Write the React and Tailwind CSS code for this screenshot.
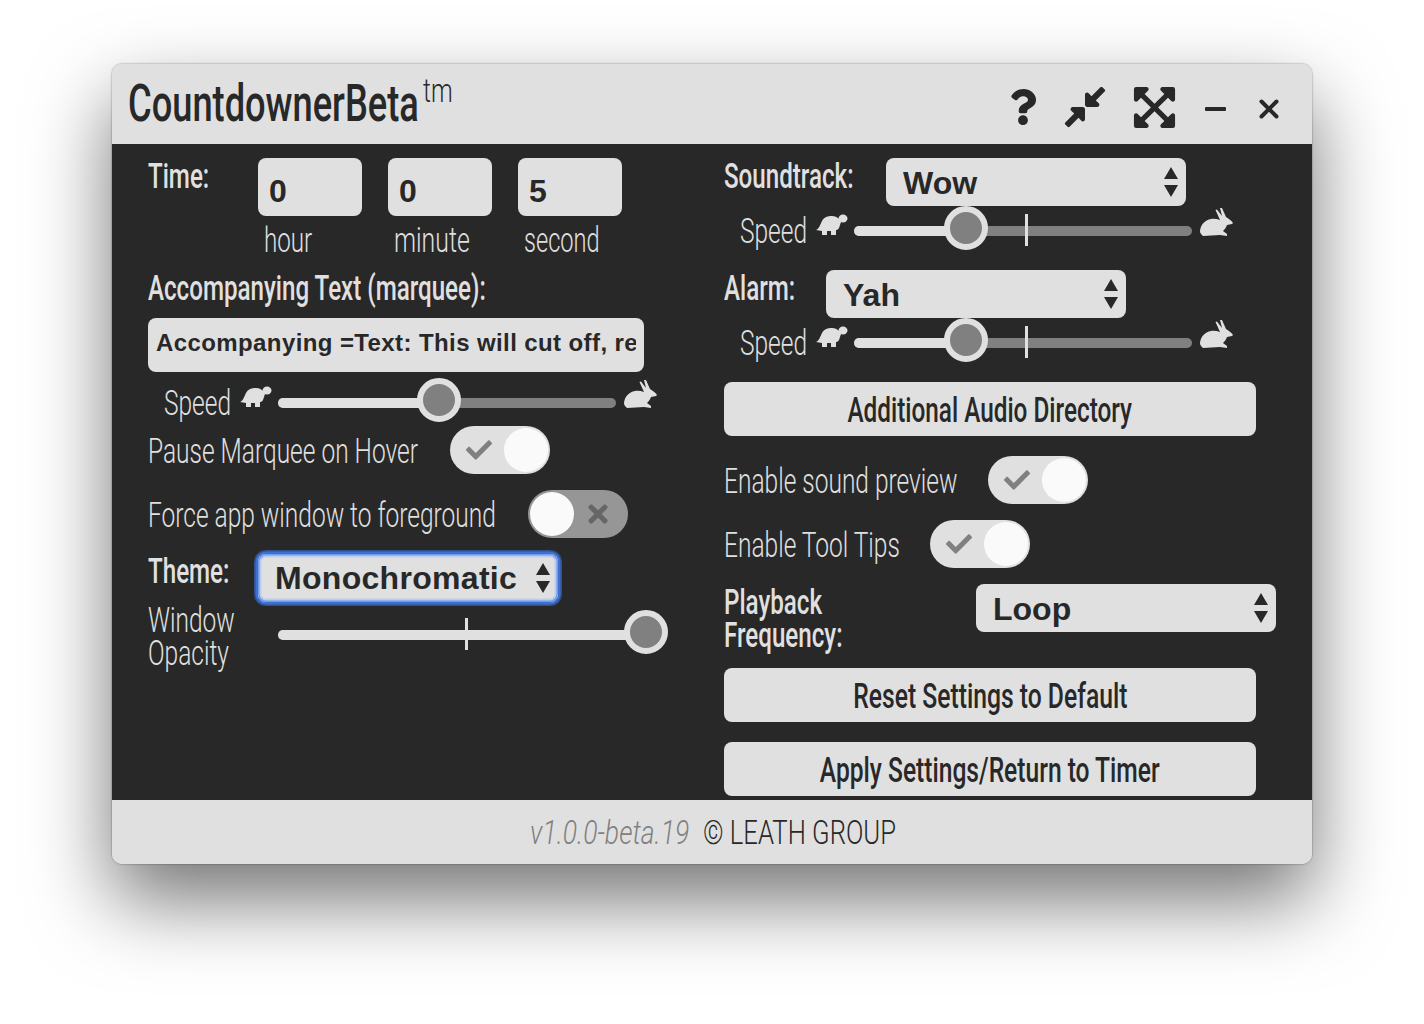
import React from 'react';
import { FaQuestion, FaCompressAlt, FaExpandArrowsAlt, FaTimes, FaCheck } from 'react-icons/fa';

const Nar = ({ children, className = '' }) => (
  <span className={`inline-block origin-left whitespace-nowrap font-['Roboto',sans-serif] ${className}`}>{children}</span>
);

// thin condensed label
const Label = ({ children, scale = 'scale-x-[0.7]' }) => (
  <Nar className={`text-[35px] leading-[32px] font-light text-[#e0e0e0] ${scale}`}>{children}</Nar>
);

// heavier condensed heading
const Heading = ({ children, scale = 'scale-x-[0.69]' }) => (
  <Nar className={`text-[35px] leading-[32px] font-medium text-[#e0e0e0] ${scale}`}>{children}</Nar>
);

const Turtle = () => (
  <svg width="32" height="22" viewBox="0 0 32 22" fill="#e0e0e0" className="shrink-0">
    <path d="M0 16 C3 15 4 11 6 7 C8 3 12 2 16 2 C19 2 21 3 23 5 L25 8 L23 14 C22 16 20 16 20 16 L20 21 L15 21 L15 17 L11 17 L11 21 L6 21 L6 17 Z" />
    <ellipse cx="27" cy="4.5" rx="4.5" ry="4" />
  </svg>
);

const Rabbit = () => (
  <svg width="33" height="29" viewBox="0 0 33 29" fill="#e0e0e0" className="shrink-0">
    <path d="M0 24 C0 17 5 12 11 11 C14 10.5 17 11 20 12 L15.5 2 L17 1.5 L22 8 L20 0 L22 0 L26 9 C29 11 32 13 33 15 L32 16 L27 17 C26 20 24 22 23 23 L27 26 L27 28 L20 27 L3 28 L1 26 Z" />
  </svg>
);

const Slider = ({ value, width = 338, tick }) => (
  <div className="relative h-[10px] rounded-full bg-[#808080] shrink-0" style={{ width }}>
    <div className="h-full rounded-full bg-[#e0e0e0]" style={{ width: value }} />
    {tick != null && <div className="absolute top-[-12px] h-[32px] w-[3px] bg-[#e0e0e0]" style={{ left: tick }} />}
    <div
      className="absolute top-[-20px] h-[44px] w-[44px] -ml-[22px] rounded-full border-[6px] border-[#e0e0e0] bg-[#808080]"
      style={{ left: value }}
    />
  </div>
);

const SpeedRow = ({ value, tick, className = '' }) => (
  <div className={`flex items-center h-[44px] pl-[16px] ${className}`}>
    <div className="w-[76px] shrink-0 pt-[2px]"><Label>Speed</Label></div>
    <div className="w-[38px] shrink-0 -mt-[12px]"><Turtle /></div>
    <Slider value={value} tick={tick} />
    <div className="ml-[8px] -mt-[18px]"><Rabbit /></div>
  </div>
);

const Toggle = ({ on }) => (
  <div className={`relative h-[48px] w-[100px] shrink-0 rounded-full ${on ? 'bg-[#e0e0e0]' : 'bg-[#969696]'}`}>
    <div className={`absolute top-[2px] h-[44px] w-[44px] rounded-full bg-[#fafafa] ${on ? 'right-[2px]' : 'left-[2px]'}`} />
    {on ? (
      <FaCheck className="absolute left-[16px] top-[11px] text-[#808080]" size={26} />
    ) : (
      <FaTimes className="absolute right-[16px] top-[10px] text-[#666666]" size={28} />
    )}
  </div>
);

const ToggleRow = ({ children, labelWidth, on, className = '' }) => (
  <div className={`flex items-center h-[48px] ${className}`}>
    <div className="shrink-0 pt-[4px]" style={{ width: labelWidth }}><Label>{children}</Label></div>
    <Toggle on={on} />
  </div>
);

const Select = ({ value, focused }) => (
  <div
    className={`relative h-[48px] w-[300px] shrink-0 rounded-[8px] bg-[#e0e0e0] ${
      focused
        ? 'shadow-[inset_0_0_0_1.5px_#6f9be8,inset_0_0_0_3.5px_#bccdee,0_0_0_2.5px_#3f6fd0,0_0_0_4px_#30508f]'
        : ''
    }`}
  >
    <select
      defaultValue={value}
      className={`h-full w-full appearance-none bg-transparent font-['Liberation_Sans',Arial,sans-serif] text-[32px] font-bold text-[#282828] outline-none ${
        focused ? 'pl-[17px] pb-[2px] tracking-[0.3px]' : 'pl-[17px] pt-[1px]'
      }`}
    >
      <option>{value}</option>
    </select>
    <svg
      width="16"
      height="32"
      viewBox="0 0 16 32"
      fill="#282828"
      className="absolute right-[7px] top-1/2 -translate-y-1/2"
    >
      <path d="M8 1 L15 13 L1 13 Z M1 19 L15 19 L8 31 Z" />
    </svg>
  </div>
);

const Button = ({ children, scale, className = '' }) => (
  <button className={`flex h-[54px] w-[532px] items-center justify-center rounded-[8px] bg-[#e0e0e0] pt-[4px] ${className}`}>
    <span className={`inline-block origin-center whitespace-nowrap font-['Roboto',sans-serif] text-[35px] leading-[32px] font-medium text-[#282828] ${scale}`}>
      {children}
    </span>
  </button>
);

const TimeBox = ({ value, unit, scale }) => (
  <div className="w-[104px] shrink-0">
    <input
      defaultValue={value}
      className="h-[58px] w-full rounded-[8px] bg-[#e0e0e0] pl-[11px] pt-[9px] font-['Liberation_Sans',Arial,sans-serif] text-[32px] font-bold text-[#282828] outline-none"
    />
    <div className="mt-[9px] pl-[6px]"><Label scale={scale}>{unit}</Label></div>
  </div>
);

const App = () => {
  return (
    <div className="flex h-[1024px] w-[1424px] justify-center overflow-hidden bg-white pt-[64px]">
      <div className="flex h-[800px] w-[1200px] flex-col overflow-hidden rounded-[10px] shadow-[0_36px_80px_rgba(0,0,0,0.55),0_0_2px_rgba(0,0,0,0.5)]">
        {/* title bar */}
        <div className="flex h-[80px] shrink-0 items-center bg-[#e0e0e0] pl-[16px] text-[#282828]">
          <div className="w-[290px] shrink-0">
            <Nar className="text-[52px] leading-[60px] font-medium scale-x-[0.697]">CountdownerBeta</Nar>
          </div>
          <div className="ml-[5px] w-[585px] -mt-[28px] shrink-0">
            <Nar className="text-[34px] leading-[40px] font-light scale-x-[0.72]">tm</Nar>
          </div>
          <FaQuestion size={36} className="-ml-[3px] mt-[6px] shrink-0" />
          <FaCompressAlt size={46} className="ml-[21px] mt-[6px] shrink-0" />
          <FaExpandArrowsAlt size={47} className="ml-[23px] mt-[6px] shrink-0" />
          <div className="ml-[27px] mt-[10px] h-[4px] w-[21px] shrink-0 rounded-[1px] bg-[#282828]" />
          <svg width="20" height="20" viewBox="0 0 20 20" className="ml-[33px] mt-[10px] shrink-0" stroke="#282828" strokeWidth="4" strokeLinecap="round">
            <path d="M2.5 2.5 L17.5 17.5 M17.5 2.5 L2.5 17.5" />
          </svg>
        </div>

        {/* settings */}
        <div className="flex flex-1 bg-[#282828] pl-[36px] pt-[14px]">
          <div className="w-[576px] shrink-0">
            <div className="flex h-[110px]">
              <div className="w-[110px] shrink-0 pt-[3px]"><Heading>Time:</Heading></div>
              <div className="flex gap-[26px]">
                <TimeBox value="0" unit="hour" scale="scale-x-[0.69]" />
                <TimeBox value="0" unit="minute" scale="scale-x-[0.71]" />
                <TimeBox value="5" unit="second" scale="scale-x-[0.675]" />
              </div>
            </div>
            <div className="h-[50px] pt-[5px]"><Heading>Accompanying Text (marquee):</Heading></div>
            <input
              defaultValue="Accompanying =Text: This will cut off, rest of it"
              className="block h-[54px] w-[496px] rounded-[8px] bg-[#e0e0e0] px-[8px] pb-[5px] font-['Liberation_Sans',Arial,sans-serif] text-[24px] font-bold tracking-[0.4px] text-[#282828] outline-none"
            />
            <SpeedRow value={161} className="mt-[9px]" />
            <ToggleRow labelWidth={302} on className="mt-[1px]">Pause Marquee on Hover</ToggleRow>
            <ToggleRow labelWidth={380} on={false} className="mt-[16px]">Force app window to foreground</ToggleRow>
            <div className="mt-[16px] flex h-[48px] items-center">
              <div className="w-[110px] shrink-0 -mt-[11px]"><Heading>Theme:</Heading></div>
              <Select value="Monochromatic" focused />
            </div>
            <div className="mt-[2px] flex">
              <div className="w-[130px] shrink-0 pt-[1px]">
                <div><Label>Window</Label></div>
                <div><Label>Opacity</Label></div>
              </div>
              <div className="pt-[26px]">
                <Slider value={368} width={368} tick={187} />
              </div>
            </div>
          </div>

          <div className="w-[560px] shrink-0">
            <div className="flex h-[48px]">
              <div className="w-[162px] shrink-0 pt-[3px]"><Heading>Soundtrack:</Heading></div>
              <Select value="Wow" />
            </div>
            <SpeedRow value={112} tick={171} className="mt-[3px]" />
            <div className="mt-[17px] flex h-[48px]">
              <div className="w-[102px] shrink-0 pt-[3px]"><Heading>Alarm:</Heading></div>
              <Select value="Yah" />
            </div>
            <SpeedRow value={112} tick={171} className="mt-[3px]" />
            <Button className="mt-[17px]" scale="scale-x-[0.695]">Additional Audio Directory</Button>
            <ToggleRow labelWidth={264} on className="mt-[20px]">Enable sound preview</ToggleRow>
            <ToggleRow labelWidth={206} on className="mt-[16px]">Enable Tool Tips</ToggleRow>
            <div className="mt-[16px] flex h-[48px]">
              <div className="w-[252px] shrink-0 pt-[3px]">
                <div><Heading>Playback</Heading></div>
                <div><Heading>Frequency:</Heading></div>
              </div>
              <Select value="Loop" />
            </div>
            <Button className="mt-[36px]" scale="scale-x-[0.705]">Reset Settings to Default</Button>
            <Button className="mt-[20px]" scale="scale-x-[0.703]">Apply Settings/Return to Timer</Button>
          </div>
        </div>

        {/* footer */}
        <div className="flex h-[64px] shrink-0 items-center bg-[#e0e0e0] pl-[418px]">
          <div className="w-[173px] shrink-0">
            <Nar className="text-[34px] font-light italic text-[#808080] scale-x-[0.78]">v1.0.0-beta.19</Nar>
          </div>
          <Nar className="text-[34px] font-light text-[#282828] scale-x-[0.755]">© LEATH GROUP</Nar>
        </div>
      </div>
    </div>
  );
};

export default App;
